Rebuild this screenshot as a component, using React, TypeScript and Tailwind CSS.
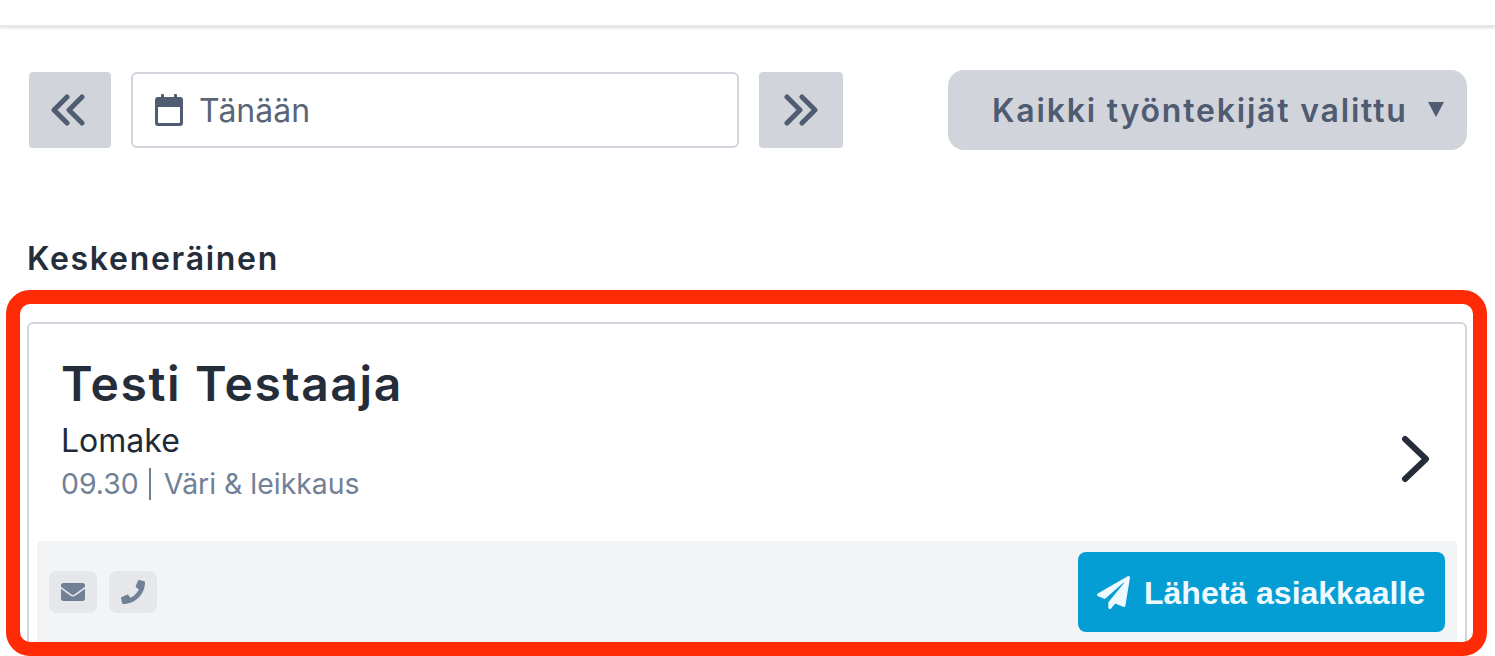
import { FaEnvelope, FaPhone, FaPaperPlane } from "react-icons/fa";

const inter = "font-['Inter',sans-serif]";

function Chevrons({ dir }: { dir: "left" | "right" }) {
  return (
    <svg width="34" height="32" viewBox="0 0 34 32" fill="none" stroke="#505c72" strokeWidth="5" strokeLinecap="round" strokeLinejoin="round">
      {dir === "left" ? (
        <>
          <path d="M16 3 L3 16 L16 29" />
          <path d="M31 3 L18 16 L31 29" />
        </>
      ) : (
        <>
          <path d="M3 3 L16 16 L3 29" />
          <path d="M18 3 L31 16 L18 29" />
        </>
      )}
    </svg>
  );
}

function Calendar() {
  return (
    <svg width="28" height="32" viewBox="0 0 28 32" fill="#505c72">
      <rect x="6" y="0" width="3" height="6" rx="1" />
      <rect x="19" y="0" width="3" height="6" rx="1" />
      <path fillRule="evenodd" d="M3 3h22a3 3 0 0 1 3 3v23a3 3 0 0 1-3 3H3a3 3 0 0 1-3-3V6a3 3 0 0 1 3-3Zm0 10v15a1 1 0 0 0 1 1h20a1 1 0 0 0 1-1V13H3Z" />
    </svg>
  );
}

export default function App() {
  return (
    <div className={`relative h-[656px] w-[1495px] overflow-hidden bg-white ${inter}`}>
      <div className="h-[27px] border-b-2 border-[#e5e7eb] bg-white shadow-sm" />

      <div className="mt-[43px] flex h-[80px] items-center pl-[29px] pr-[28px]">
        <button className="flex h-[76px] w-[82px] items-center justify-center rounded-[4px] bg-[#d1d5db] pr-[4px]">
          <Chevrons dir="left" />
        </button>
        <div className="ml-[20px] flex h-[76px] w-[608px] items-center rounded-[6px] border-2 border-[#d1d5db] pl-[22px]">
          <Calendar />
          <span className="ml-[16px] pt-[2px] text-[32px] text-[#5a6576]">Tänään</span>
        </div>
        <button className="ml-[20px] flex h-[76px] w-[84px] items-center justify-center rounded-[4px] bg-[#d1d5db]">
          <Chevrons dir="right" />
        </button>
        <button className="ml-[105px] flex h-[80px] w-[519px] items-center rounded-[16px] bg-[#d1d5db] pl-[44px]">
          <span className="pt-[2px] text-[32px] font-semibold tracking-[1.8px] text-[#4f5b71]">Kaikki työntekijät valittu</span>
          <span className="ml-[20px] mb-[2px] h-0 w-0 border-x-[8px] border-t-[15px] border-x-transparent border-t-[#4f5b71]" />
        </button>
      </div>

      <h2 className="ml-[27px] mt-[90px] text-[32px] font-semibold leading-[38px] tracking-[1.7px] text-[#262d3a]">Keskeneräinen</h2>

      <div className="ml-[27px] mt-[44px] h-[340px] w-[1440px] rounded-[6px] border-2 border-[#d1d5db] bg-white">
        <div className="flex h-[217px] items-start pr-[34px]">
          <div className="flex-1 pl-[32px] pt-[30px]">
            <div className="text-[48px] font-semibold leading-[60px] tracking-[1.6px] text-[#262d3a]">Testi Testaaja</div>
            <div className="mt-[7px] text-[32px] leading-[40px] text-[#1f2937]">Lomake</div>
            <div className="mt-[3px] flex items-center text-[28.4px] leading-[40px] text-[#718096]">
              <span>09.30</span>
              <span className="ml-[10px] mr-[13px] h-[32px] w-[2px] bg-[#718096]" />
              <span>Väri &amp; leikkaus</span>
            </div>
          </div>
          <svg className="mt-[111px]" width="30" height="48" viewBox="0 0 30 48" fill="none" stroke="#262d3a" strokeWidth="6" strokeLinecap="round" strokeLinejoin="round">
            <path d="M4 4 L25 24 L4 44" />
          </svg>
        </div>
        <div className="mx-[8px] flex h-[120px] items-start justify-between rounded-[4px] bg-[#f3f4f6] px-[12px] pt-[11px]">
          <div className="mt-[19px] flex gap-[12px]">
            <div className="flex h-[42px] w-[48px] items-center justify-center rounded-[8px] bg-[#e5e7eb]">
              <FaEnvelope className="h-[24px] w-[24px] text-[#718096]" />
            </div>
            <div className="flex h-[42px] w-[48px] items-center justify-center rounded-[8px] bg-[#e5e7eb]">
              <FaPhone className="h-[24px] w-[24px] text-[#718096]" />
            </div>
          </div>
          <button className="flex h-[80px] w-[367px] items-center rounded-[8px] bg-[#059ed4] pl-[19px] font-['Liberation_Sans',sans-serif] text-[32px] font-bold text-[#eefaff]">
            <FaPaperPlane className="h-[33px] w-[33px]" />
            <span className="ml-[14px] pt-[2px]">Lähetä asiakkaalle</span>
          </button>
        </div>
      </div>

      <div className="pointer-events-none absolute left-[6px] top-[290px] h-[366px] w-[1481px] rounded-[24px] border-[14px] border-[#ff2b06]" />
    </div>
  );
}
